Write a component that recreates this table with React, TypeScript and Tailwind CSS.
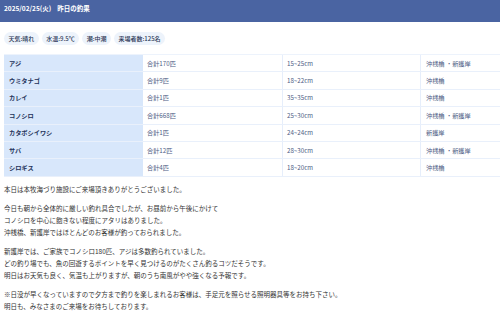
import React from 'react';

type Catch = { name: string; total: string; size: string; place: string };

const catches: Catch[] = [
  { name: 'アジ', total: '合計170匹', size: '15~25cm', place: '沖桟橋 ・新護岸' },
  { name: 'ウミタナゴ', total: '合計9匹', size: '18~22cm', place: '沖桟橋' },
  { name: 'カレイ', total: '合計1匹', size: '35~35cm', place: '沖桟橋' },
  { name: 'コノシロ', total: '合計668匹', size: '25~30cm', place: '沖桟橋 ・新護岸' },
  { name: 'カタボシイワシ', total: '合計1匹', size: '24~24cm', place: '新護岸' },
  { name: 'サバ', total: '合計12匹', size: '28~30cm', place: '沖桟橋 ・新護岸' },
  { name: 'シロギス', total: '合計4匹', size: '18~20cm', place: '沖桟橋' },
];

const pills = ['天気:晴れ', '水温:9.5℃', '潮:中潮', '来場者数:125名'];

const paragraphs: string[][] = [
  ['本日は本牧海づり施設にご来場頂きありがとうございました。'],
  [
    '今日も朝から全体的に厳しい釣れ具合でしたが、お昼前から午後にかけて',
    'コノシロを中心に飽きない程度にアタリはありました。',
    '沖桟橋、新護岸ではほとんどのお客様が釣っておられました。',
  ],
  [
    '新護岸では、ご家族でコノシロ180匹、アジは多数釣られていました。',
    'どの釣り場でも、魚の回遊するポイントを早く見つけるのがたくさん釣るコツだそうです。',
    '明日はお天気も良く、気温も上がりますが、朝のうち南風がやや強くなる予報です。',
  ],
  [
    '※日没が早くなっていますので夕方まで釣りを楽しまれるお客様は、手足元を照らせる照明器具等をお持ち下さい。',
    '明日も、みなさまのご来場をお待ちしております。',
  ],
];

export default function App() {
  return (
    <div
      className="w-[500px] h-[314px] overflow-hidden bg-white"
      style={{ fontFamily: '"Noto Sans CJK JP", "Noto Sans", sans-serif' }}
    >
      {/* header */}
      <div className="h-[22px] bg-[#4a64a2] px-[4px] pt-[4px]">
        <p className="text-[6.5px] leading-[8px] font-bold text-white whitespace-nowrap">
          2025/02/25(火)<span className="ml-[6px]">昨日の釣果</span>
        </p>
      </div>

      {/* conditions */}
      <div className="flex gap-[3px] px-[4px] mt-[10px]">
        {pills.map((p) => (
          <span
            key={p}
            className="h-[13px] flex items-center px-[4.5px] rounded-full bg-[#edf3fb] text-[#2b3656] text-[6px] font-medium whitespace-nowrap"
          >
            {p}
          </span>
        ))}
      </div>

      {/* catch table */}
      <div className="mt-[9px] ml-[4px] border-t border-[#edf3fc]">
        {catches.map((c) => (
          <div
            key={c.name}
            className="grid grid-cols-[139px_139px_138px_1fr] h-[17.4px] border-b border-[#e9f0fb] text-[6.2px] whitespace-nowrap"
          >
            <div className="bg-[#d8e7fb] flex items-center px-[5px] font-bold text-[#24335a]">{c.name}</div>
            <div className="flex items-center px-[4px] text-[#4d5c84]">{c.total}</div>
            <div className="flex items-center px-[4px] text-[#4d5c84] border-l border-[#e6eefb]">{c.size}</div>
            <div className="flex items-center px-[5px] text-[#4d5c84] border-l border-[#e6eefb]">{c.place}</div>
          </div>
        ))}
      </div>

      {/* report */}
      <div className="px-[4px] mt-[6px] text-[6.5px] leading-[12px] text-[#333333]">
        {paragraphs.map((para, i) => (
          <div key={i} className="mb-[7px]">
            {para.map((line) => (
              <p key={line} className="whitespace-nowrap">{line}</p>
            ))}
          </div>
        ))}
      </div>
    </div>
  );
}
